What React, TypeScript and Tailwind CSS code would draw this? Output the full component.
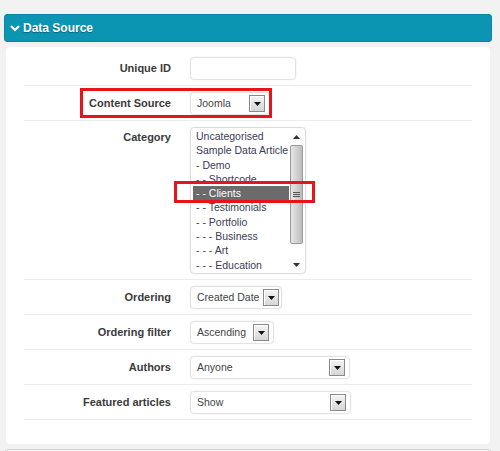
import React from "react";

const font = { fontFamily: '"Liberation Sans", Arial, sans-serif' };

function DropButton() {
  return (
    <div className="flex h-[17px] w-[16px] shrink-0 items-center justify-center border border-[#8a8a8a] bg-gradient-to-b from-[#f4f4f4] to-[#d6d6d6] shadow-[inset_1px_1px_0_#ffffff]">
      <svg width="7" height="4" viewBox="0 0 7 4">
        <path d="M0 0h7L3.5 4z" fill="#111" />
      </svg>
    </div>
  );
}

function Select({ value, width }: { value: string; width: string }) {
  return (
    <div className={`flex h-[23px] items-center justify-between gap-[4px] rounded-[4px] border border-[#e2e2e2] bg-white pl-[6px] pr-[4px] shadow-[0_0_2px_rgba(0,0,0,0.08)] ${width}`}>
      <span className="whitespace-nowrap text-[10.5px] text-[#444]">{value}</span>
      <DropButton />
    </div>
  );
}

const categories = [
  "Uncategorised",
  "Sample Data Article",
  "- Demo",
  "- - Shortcode",
  "- - Clients",
  "- - Testimonials",
  "- - Portfolio",
  "- - - Business",
  "- - - Art",
  "- - - Education",
];

function ListBox() {
  return (
    <div className="flex h-[147px] w-[116px] rounded-[4px] border border-[#dcdcdc] bg-white py-[1px] pl-[2px] pr-[2px] shadow-[0_0_2px_rgba(0,0,0,0.08)]">
      <div className="min-w-0 flex-1">
        {categories.map((c) => (
          <div
            key={c}
            className={`h-[14.3px] truncate whitespace-nowrap pl-[3px] text-[10.5px] leading-[14.3px] ${c === "- - Clients" ? "bg-[#6b6b6b] text-white" : "text-[#3b3b55]"}`}
          >
            {c}
          </div>
        ))}
      </div>
      {/* scrollbar */}
      <div className="flex w-[14px] flex-col items-center">
        <div className="flex h-[16px] items-center">
          <svg width="7" height="4" viewBox="0 0 7 4">
            <path d="M3.5 0L7 4H0z" fill="#333" />
          </svg>
        </div>
        <div className="flex h-[99px] w-[13px] items-center justify-center rounded-[2px] border border-[#9a9a9a] bg-gradient-to-r from-[#e6e6e6] via-[#d2d2d2] to-[#bdbdbd]">
          <svg width="7" height="6" viewBox="0 0 7 6">
            <path d="M0 0.5h7M0 2.5h7M0 4.5h7" stroke="#555" strokeWidth="1" />
          </svg>
        </div>
        <div className="flex-1" />
        <div className="flex h-[14px] items-center">
          <svg width="7" height="4" viewBox="0 0 7 4">
            <path d="M0 0h7L3.5 4z" fill="#333" />
          </svg>
        </div>
      </div>
    </div>
  );
}

function Row({ label, top, children }: { label: string; top?: boolean; children: React.ReactNode }) {
  return (
    <div className={`flex gap-[19px] border-b border-[#ececec] pt-[6px] pb-[5px] ${top ? "items-start" : "items-center"}`}>
      <div className={`w-[147px] shrink-0 text-right text-[11px] font-bold text-[#3a3a3a] ${top ? "pt-[2px]" : ""}`}>{label}</div>
      {children}
    </div>
  );
}

export default function App() {
  return (
    <div className="h-[451px] w-[500px] overflow-hidden bg-[#f2f2f2] px-[4px] pt-[14px]" style={font}>
      <div className="w-[488px]">
        <div className="flex h-[28px] items-center gap-[3px] rounded-[3px] border border-[#0b86a2] bg-[#0c95b3] pl-[5px]">
          <svg width="10" height="7" viewBox="0 0 10 7">
            <path d="M1 1l4 4 4-4" stroke="white" strokeWidth="2.2" fill="none" />
          </svg>
          <span className="text-[12px] font-bold text-white [text-shadow:0_1px_1px_rgba(0,0,0,0.35)]">Data Source</span>
        </div>

        <div className="relative mx-[2px] mt-[5px] h-[397px] rounded-[4px] bg-white px-[18px] pt-[4px]">
          <Row label="Unique ID">
            <div className="h-[23px] w-[106px] rounded-[4px] border border-[#e2e2e2] bg-white shadow-[0_0_2px_rgba(0,0,0,0.08)]" />
          </Row>
          <Row label="Content Source">
            <Select value="Joomla" width="w-[80px]" />
          </Row>
          <Row label="Category" top>
            <ListBox />
          </Row>
          <Row label="Ordering">
            <Select value="Created Date" width="w-[92px]" />
          </Row>
          <Row label="Ordering filter">
            <Select value="Ascending" width="w-[84px]" />
          </Row>
          <Row label="Authors">
            <Select value="Anyone" width="w-[160px]" />
          </Row>
          <Row label="Featured articles">
            <Select value="Show" width="w-[161px]" />
          </Row>

          {/* red annotation boxes */}
          <div className="pointer-events-none absolute left-[74px] top-[41px] h-[30px] w-[192px] border-[3px] border-[#e8141c]" />
          <div className="pointer-events-none absolute left-[168px] top-[134px] h-[22px] w-[141px] border-[3px] border-[#e8141c]" />
        </div>

        <div className="mt-[5px] h-[10px] rounded-t-[4px] border border-[#d0d0d0] bg-[#f7f7f7]" />
      </div>
    </div>
  );
}
